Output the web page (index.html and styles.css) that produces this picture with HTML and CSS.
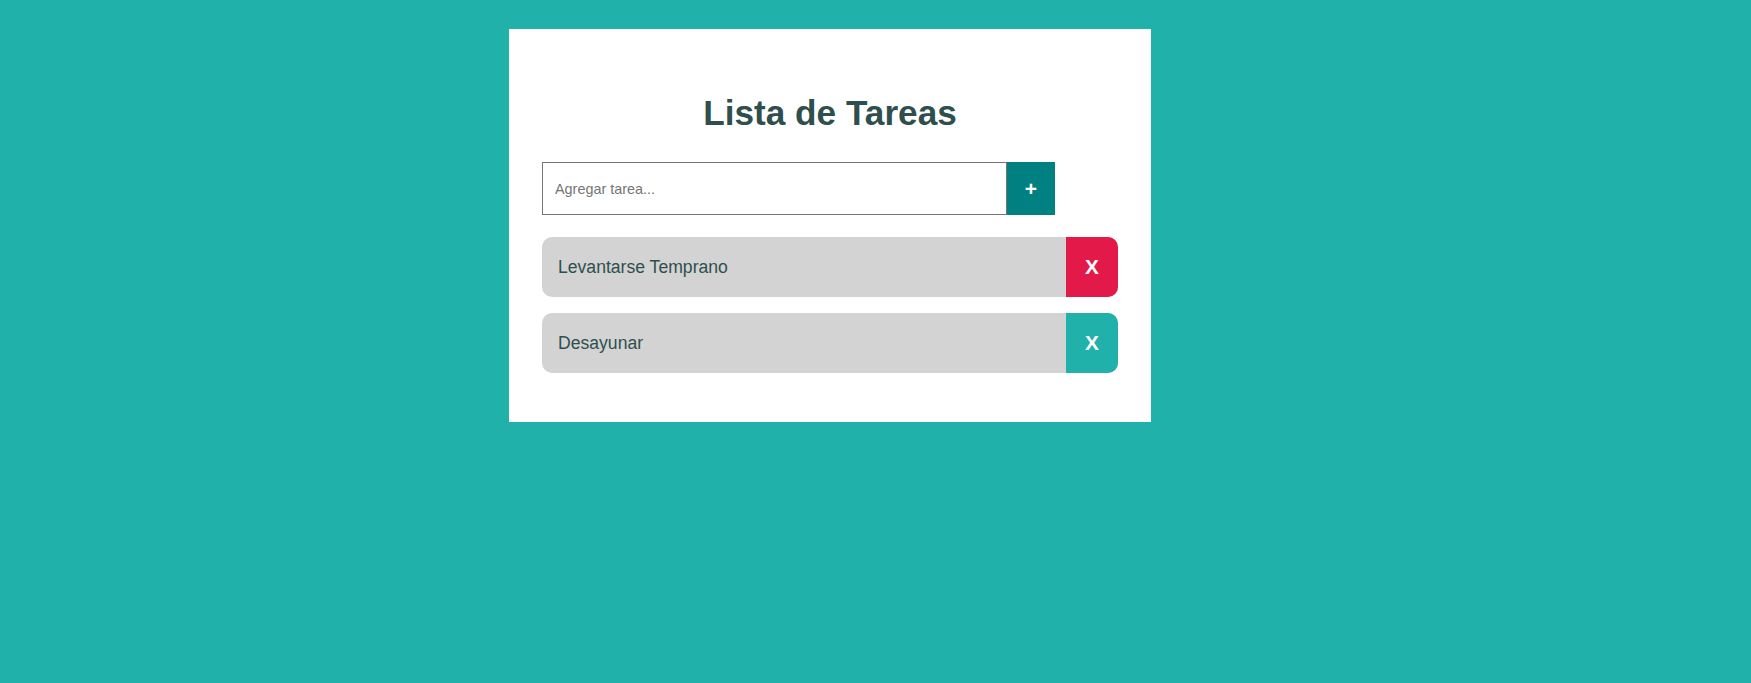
FILE: index.html
```html
<!DOCTYPE html>
<html lang="es">
<head>
<meta charset="utf-8">
<title>Lista de Tareas</title>
<link rel="stylesheet" href="styles.css">
</head>
<body>
  <main class="card">
    <h1 class="title">Lista de Tareas</h1>
    <form class="add-row" onsubmit="return false">
      <input class="add-input" type="text" placeholder="Agregar tarea...">
      <button class="add-btn" type="button">+</button>
    </form>
    <ul class="tasks">
      <li class="task">
        <span class="task-text">Levantarse Temprano</span>
        <button class="task-del task-del--active" type="button">X</button>
      </li>
      <li class="task">
        <span class="task-text">Desayunar</span>
        <button class="task-del" type="button">X</button>
      </li>
    </ul>
  </main>
</body>
</html>
```

FILE: styles.css
```css
* { box-sizing: border-box; }

html, body {
  margin: 0;
  padding: 0;
}

body {
  background: #20b2aa;
  font-family: "Liberation Sans", Arial, sans-serif;
  min-height: 683px;
  padding-top: 29px;
}

.card {
  width: 642px;
  margin-left: 509px;
  background: #ffffff;
  padding: 64px 33px 49px;
}

.title {
  margin: 0;
  text-align: center;
  font-size: 35.2px;
  line-height: 40px;
  font-weight: 700;
  color: #2f4f4f;
}

.add-row {
  display: flex;
  margin: 29px 0 0;
}

.add-input {
  width: 465px;
  height: 53px;
  border: 1px solid #767676;
  border-radius: 0;
  padding: 0 12px;
  font-family: "Liberation Sans", Arial, sans-serif;
  font-size: 14.4px;
  color: #2f4f4f;
  outline: none;
}

.add-input::placeholder {
  color: #757575;
}

.add-btn {
  width: 48px;
  height: 53px;
  border: none;
  background: #008080;
  color: #ffffff;
  font-family: "Liberation Sans", Arial, sans-serif;
  font-size: 21px;
  font-weight: 700;
  padding: 0;
  cursor: pointer;
}

.tasks {
  list-style: none;
  margin: 22px 0 0;
  padding: 0;
  display: flex;
  flex-direction: column;
  gap: 16px;
}

.task {
  display: flex;
  align-items: stretch;
  height: 60px;
  background: #d3d3d3;
  border-radius: 10px;
  overflow: hidden;
}

.task-text {
  flex: 1;
  display: flex;
  align-items: center;
  padding-left: 16px;
  font-size: 17.6px;
  color: #2f4f4f;
}

.task-del {
  width: 52px;
  border: none;
  padding: 0;
  background: #20b2aa;
  color: #ffffff;
  font-family: "Liberation Sans", Arial, sans-serif;
  font-size: 20.8px;
  font-weight: 700;
  cursor: pointer;
}

.task-del--active {
  background: #e31a49;
}
```
